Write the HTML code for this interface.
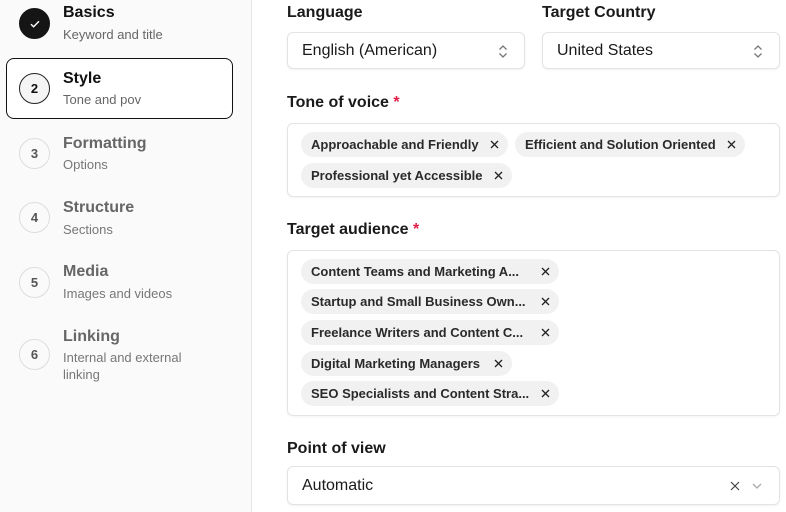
<!DOCTYPE html>
<html><head><style>
*{box-sizing:border-box;margin:0;padding:0}
body{width:786px;height:512px;overflow:hidden;background:#fff;font-family:"Liberation Sans",sans-serif;position:relative;color:#111}
.side{position:absolute;left:0;top:0;width:252px;height:512px;background:#fafafa;border-right:1px solid #e6e6e6}
.circ{position:absolute;left:19px;width:31px;height:31px;border-radius:50%;border:1px solid #ddd;background:#fafafa;font-size:13px;font-weight:bold;color:#555;display:flex;align-items:center;justify-content:center}
.t{position:absolute;left:63px;font-size:16px;font-weight:bold;color:#666;line-height:18px}
.s{position:absolute;left:63px;font-size:13px;color:#777;line-height:17px}
.lab{position:absolute;font-size:16px;font-weight:bold;color:#1a1a1a;line-height:18px}
.lab b{color:#e11d48}
.sel{position:absolute;height:37px;border:1px solid #e3e3e3;border-radius:6px;box-shadow:0 1px 2px rgba(0,0,0,.06);font-size:16px;line-height:35px;padding-left:14px;color:#1a1a1a}
.box{position:absolute;left:287px;width:493px;border:1px solid #e3e3e3;border-radius:6px;box-shadow:0 1px 2px rgba(0,0,0,.05)}
.chip{position:absolute;height:25px;border-radius:13px;background:#f1f1f1;font-size:13px;font-weight:bold;color:#2a2a2a;line-height:25px;padding-left:10px;white-space:nowrap}
.chip svg{position:absolute;right:9px;top:8px}
</style></head><body>
<div class="side">
 <div class="circ" style="top:8px;background:#151515;border-color:#151515"><svg width="12" height="10" viewBox="0 0 12 10"><path d="M2 5.2l2.6 2.6L10 2.3" stroke="#fff" stroke-width="1.4" fill="none"/></svg></div>
 <div class="t" style="top:4px;color:#111">Basics</div><div class="s" style="top:26px;color:#666">Keyword and title</div>
 <div style="position:absolute;left:6px;top:58px;width:227px;height:61px;border:1px solid #111;border-radius:8px;background:#fff"></div>
 <div class="circ" style="top:73px;border-color:#222;background:#f5f5f5;color:#111">2</div>
 <div class="t" style="top:70px;color:#111">Style</div><div class="s" style="top:91px;color:#666">Tone and pov</div>
 <div class="circ" style="top:138px">3</div><div class="t" style="top:135px">Formatting</div><div class="s" style="top:156px">Options</div>
 <div class="circ" style="top:202px">4</div><div class="t" style="top:199px">Structure</div><div class="s" style="top:221px">Sections</div>
 <div class="circ" style="top:267px">5</div><div class="t" style="top:263px">Media</div><div class="s" style="top:285px">Images and videos</div>
 <div class="circ" style="top:339px">6</div><div class="t" style="top:328px">Linking</div><div class="s" style="top:349px">Internal and external<br>linking</div>
</div>

<div class="lab" style="left:287px;top:4px">Language</div>
<div class="lab" style="left:542px;top:4px">Target Country</div>
<div class="sel" style="left:287px;top:32px;width:238px">English (American)<svg style="position:absolute;right:16px;top:11px" width="10" height="15" viewBox="0 0 10 15"><path d="M1.5 5.5L5 2l3.5 3.5M1.5 9.5L5 13l3.5-3.5" stroke="#777" stroke-width="1.3" fill="none"/></svg></div>
<div class="sel" style="left:542px;top:32px;width:238px">United States<svg style="position:absolute;right:16px;top:11px" width="10" height="15" viewBox="0 0 10 15"><path d="M1.5 5.5L5 2l3.5 3.5M1.5 9.5L5 13l3.5-3.5" stroke="#777" stroke-width="1.3" fill="none"/></svg></div>

<div class="lab" style="left:287px;top:94px">Tone of voice <b>*</b></div>
<div class="box" style="top:123px;height:74px"></div>
<div class="chip" style="left:301px;top:132px;width:207px">Approachable and Friendly<svg width="9" height="9" viewBox="0 0 9 9"><path d="M1 1l7 7M8 1L1 8" stroke="#222" stroke-width="1.3"/></svg></div>
<div class="chip" style="left:515px;top:132px;width:230px">Efficient and Solution Oriented<svg width="9" height="9" viewBox="0 0 9 9"><path d="M1 1l7 7M8 1L1 8" stroke="#222" stroke-width="1.3"/></svg></div>
<div class="chip" style="left:301px;top:163px;width:211px">Professional yet Accessible<svg width="9" height="9" viewBox="0 0 9 9"><path d="M1 1l7 7M8 1L1 8" stroke="#222" stroke-width="1.3"/></svg></div>

<div class="lab" style="left:287px;top:221px">Target audience <b>*</b></div>
<div class="box" style="top:250px;height:166px"></div>
<div class="chip" style="left:301px;top:259px;width:258px">Content Teams and Marketing A...<svg width="9" height="9" viewBox="0 0 9 9"><path d="M1 1l7 7M8 1L1 8" stroke="#222" stroke-width="1.3"/></svg></div>
<div class="chip" style="left:301px;top:289px;width:258px">Startup and Small Business Own...<svg width="9" height="9" viewBox="0 0 9 9"><path d="M1 1l7 7M8 1L1 8" stroke="#222" stroke-width="1.3"/></svg></div>
<div class="chip" style="left:301px;top:320px;width:258px">Freelance Writers and Content C...<svg width="9" height="9" viewBox="0 0 9 9"><path d="M1 1l7 7M8 1L1 8" stroke="#222" stroke-width="1.3"/></svg></div>
<div class="chip" style="left:301px;top:351px;width:211px">Digital Marketing Managers<svg width="9" height="9" viewBox="0 0 9 9"><path d="M1 1l7 7M8 1L1 8" stroke="#222" stroke-width="1.3"/></svg></div>
<div class="chip" style="left:301px;top:381px;width:258px">SEO Specialists and Content Stra...<svg width="9" height="9" viewBox="0 0 9 9"><path d="M1 1l7 7M8 1L1 8" stroke="#222" stroke-width="1.3"/></svg></div>

<div class="lab" style="left:287px;top:440px">Point of view</div>
<div class="sel" style="left:287px;top:466px;width:493px;height:39px;line-height:37px">Automatic
<svg style="position:absolute;right:39px;top:14px" width="10" height="10" viewBox="0 0 10 10"><path d="M1 1l8 8M9 1L1 9" stroke="#444" stroke-width="1.2"/></svg>
<svg style="position:absolute;right:16px;top:14px" width="12" height="10" viewBox="0 0 12 10"><path d="M2 3l4 4 4-4" stroke="#aaa" stroke-width="1.3" fill="none"/></svg></div>
</body></html>
